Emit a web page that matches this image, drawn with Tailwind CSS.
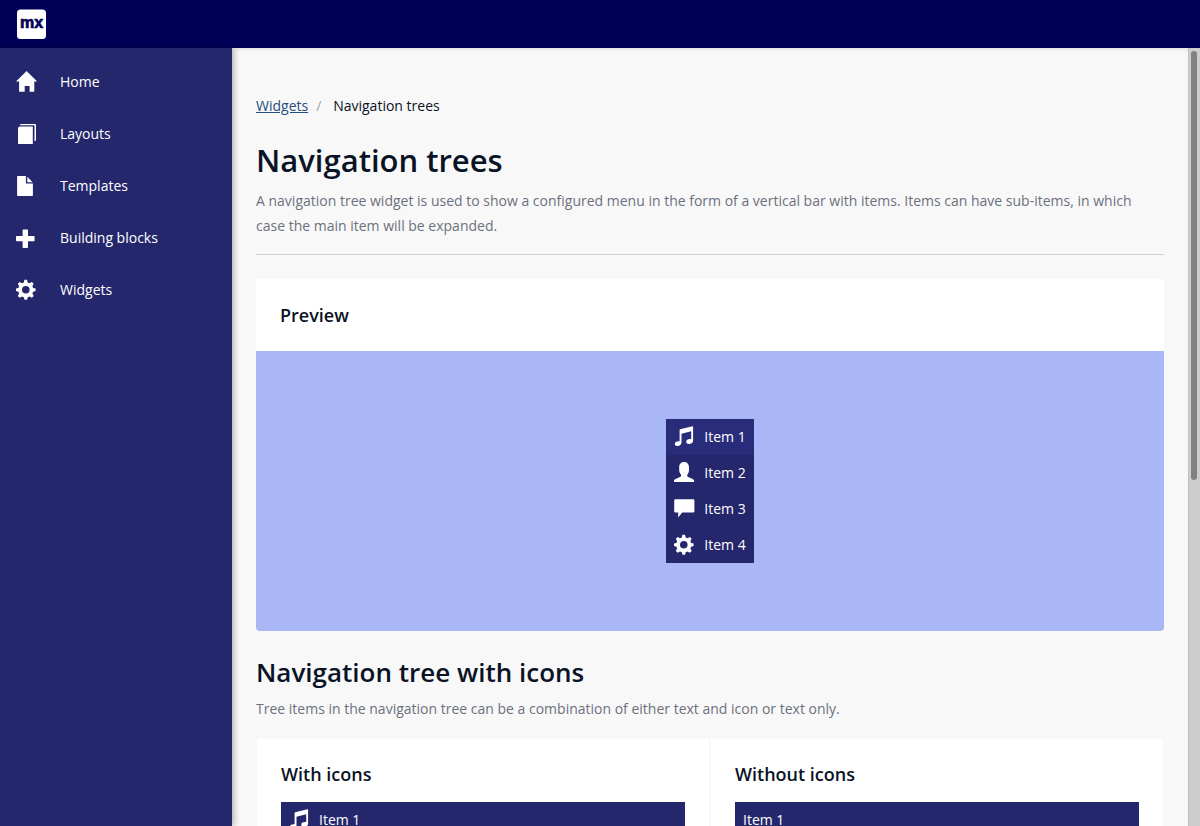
<!DOCTYPE html>
<html lang="en">
<head>
<meta charset="utf-8">
<title>Navigation trees</title>
<script src="https://cdn.jsdelivr.net/npm/@tailwindcss/browser@4"></script>
</head>
<body class="flex h-screen flex-col overflow-hidden bg-[#f8f8f8] font-['Open_Sans',sans-serif] text-sm text-[#0a1325]">
<svg class="hidden" aria-hidden="true">
  <symbol id="home" viewBox="0 0 22 22"><path d="M10.6 0 21.2 10.5H18.3V20.3Q18.3 20.8 17.8 20.8H13.6V15H8.7V20.8H3.7Q3.1 20.8 3.1 20.3V10.5H0Z"/></symbol>
  <symbol id="layers" viewBox="0 0 22 22"><path d="M2 4.8 3.6 3.6H16.8V21H2.7Q2 21 2 20.3ZM3.4 2.2 4.9 1H19.2Q20 1 20 1.8V17.2L18.5 18.6V2.3H3.4Z"/></symbol>
  <symbol id="file" viewBox="0 0 22 22"><path d="M1.8 1H9.9V8.4H16.9V20.3Q16.9 21 16.2 21H1.8Q1.1 21 1.1 20.3V1.7Q1.1 1 1.8 1ZM11.3 1.8 16.6 7.2H11.3Z"/></symbol>
  <symbol id="plus" viewBox="0 0 22 22"><path d="M7.4 2.4H11.2Q12 2.4 12 3.2V9.1H17.8Q18.6 9.1 18.6 9.9V13.5Q18.6 14.3 17.8 14.3H12V20.2Q12 21 11.2 21H7.4Q6.6 21 6.6 20.2V14.3H.8Q0 14.3 0 13.5V9.9Q0 9.1.8 9.1H6.6V3.2Q6.6 2.4 7.4 2.4Z"/></symbol>
  <symbol id="gear" viewBox="0 0 22 22"><path fill-rule="evenodd" d="M8.4.8H11L11.7 3.5 13.5 4.3 15.8 2.9 17.7 4.8 16.4 7.1 17.1 8.9 19.6 9.5V12.1L17.1 12.8 16.4 14.6 17.7 16.9 15.8 18.8 13.5 17.5 11.7 18.2 11.1 20.7H8.5L7.8 18.2 6 17.5 3.7 18.8 1.8 16.9 3.1 14.6 2.4 12.8 0 12.1V9.5L2.4 8.9 3.1 7.1 1.8 4.8 3.7 2.9 6 4.3 7.8 3.5ZM9.8 7A3.8 3.8 0 1 0 9.8 14.6 3.8 3.8 0 1 0 9.8 7Z"/></symbol>
  <symbol id="music" viewBox="0 0 22 22"><path fill-rule="evenodd" d="M18.4.3Q19.1.1 19.1.8V14.4C19.1 16.5 17.2 18 15.2 18 13.4 18 12.2 17 12.2 15.7 12.2 14 14.3 12.7 17.2 13.2V5.2L7.5 7.7V16.2C7.5 18.5 5.6 20.1 3.6 20.1 1.9 20.1.8 19.2.8 17.9.8 16.1 2.8 14.8 5.6 15.3V3.9Q5.6 3.3 6.2 3.2Z"/></symbol>
  <symbol id="user" viewBox="0 0 22 22"><path d="M10.1 0C13.1 0 15 2 15 5V8C15 10.2 14.2 11.5 13.3 12.5V14.4L19.1 17.2Q20.1 17.8 20.1 18.8V19.4Q20.1 20 19.5 20H.6Q0 20 0 19.4V18.8Q0 17.8 1 17.2L7 14.4V12.5C6 11.5 5.2 10.2 5.2 8V5C5.2 2 7.2 0 10.1 0Z"/></symbol>
  <symbol id="comment" viewBox="0 0 22 22"><path d="M1.6 1.2H19Q20.4 1.2 20.4 2.6V13.2Q20.4 14.6 19 14.6H8.2L4.2 19.4V14.6H1.6Q.2 14.6.2 13.2V2.6Q.2 1.2 1.6 1.2Z"/></symbol>
</svg>

<header class="flex h-12 shrink-0 items-center bg-[#000058] px-4">
  <a href="#" aria-label="mx" class="ml-px block">
    <svg class="size-[30px]" viewBox="0 0 30 30"><rect y=".5" width="29" height="29.5" rx="3.5" fill="#fff"/><text x="14.5" y="19" text-anchor="middle" font-family="Liberation Sans, sans-serif" font-weight="700" font-size="16" fill="#000058" stroke="#000058" stroke-width=".7">mx</text></svg>
  </a>
</header>

<div class="flex min-h-0 flex-1">
  <aside class="z-10 w-58 shrink-0 bg-[#24276c] pt-2 shadow-[2px_0_6px_rgba(0,0,0,0.3)]">
    <nav class="flex flex-col text-white">
      <a href="#" class="flex h-13 items-center gap-[22px] px-4"><svg class="size-[22px] fill-white"><use href="#home"/></svg>Home</a>
      <a href="#" class="flex h-13 items-center gap-[22px] px-4"><svg class="size-[22px] fill-white"><use href="#layers"/></svg>Layouts</a>
      <a href="#" class="flex h-13 items-center gap-[22px] px-4"><svg class="size-[22px] fill-white"><use href="#file"/></svg>Templates</a>
      <a href="#" class="flex h-13 items-center gap-[22px] px-4"><svg class="size-[22px] fill-white"><use href="#plus"/></svg>Building blocks</a>
      <a href="#" class="flex h-13 items-center gap-[22px] px-4"><svg class="size-[22px] fill-white"><use href="#gear"/></svg>Widgets</a>
    </nav>
  </aside>

  <main class="min-w-0 flex-1 overflow-hidden px-6 pt-12 shadow-[inset_0_4px_4px_-3px_rgba(0,0,0,0.12)]">
    <nav aria-label="Breadcrumb" class="flex leading-5">
      <a href="#" class="text-[#264f7e] underline">Widgets</a>
      <span class="w-[25px] pl-2 text-[#a0a3ab]">/</span>
      <span>Navigation trees</span>
    </nav>
    <h1 class="mt-6 text-[31px] leading-10 font-semibold">Navigation trees</h1>
    <p class="mt-2 leading-[25px] text-[#6c717e]">A navigation tree widget is used to show a configured menu in the form of a vertical bar with items. Items can have sub-items, in which case the main item will be expanded.</p>
    <hr class="mt-4 border-[#ced0d3]">

    <section class="mt-6 overflow-hidden rounded bg-white">
      <h2 class="px-6 py-6 text-lg leading-6 font-semibold">Preview</h2>
      <div class="flex h-70 items-center justify-center bg-[#a9b7f6]">
        <nav class="flex flex-col bg-[#24276c] text-white">
          <a href="#" class="flex h-9 items-center gap-2 bg-[#292c7b] px-2"><svg class="size-[22px] fill-white"><use href="#music"/></svg>Item 1</a>
          <a href="#" class="flex h-9 items-center gap-2 px-2"><svg class="size-[22px] fill-white"><use href="#user"/></svg>Item 2</a>
          <a href="#" class="flex h-9 items-center gap-2 px-2"><svg class="size-[22px] fill-white"><use href="#comment"/></svg>Item 3</a>
          <a href="#" class="flex h-9 items-center gap-2 px-2"><svg class="size-[22px] fill-white"><use href="#gear"/></svg>Item 4</a>
        </nav>
      </div>
    </section>

    <h2 class="mt-6 text-[26px] leading-[34px] font-semibold">Navigation tree with icons</h2>
    <p class="mt-[7px] leading-[25px] text-[#6c717e]">Tree items in the navigation tree can be a combination of either text and icon or text only.</p>
    <div class="mt-[18px] grid grid-cols-2 gap-0.5 px-px">
      <section class="bg-white p-6">
        <h3 class="text-lg leading-[23px] font-semibold">With icons</h3>
        <nav class="mt-4 bg-[#24276c] text-white">
          <a href="#" class="flex h-9 items-center gap-2 px-2"><svg class="size-[22px] fill-white"><use href="#music"/></svg>Item 1</a>
        </nav>
      </section>
      <section class="bg-white p-6">
        <h3 class="text-lg leading-[23px] font-semibold">Without icons</h3>
        <nav class="mt-4 bg-[#24276c] text-white">
          <a href="#" class="flex h-9 items-center px-2">Item 1</a>
        </nav>
      </section>
    </div>
  </main>

  <div class="flex w-3 shrink-0 border-l border-[#c4c1bb] bg-[#cdcdcd] pt-[3px] pl-0.5" aria-hidden="true">
    <div class="h-[55.4%] w-1.5 rounded-full bg-[#7e8382]"></div>
  </div>
</div>
</body>
</html>
